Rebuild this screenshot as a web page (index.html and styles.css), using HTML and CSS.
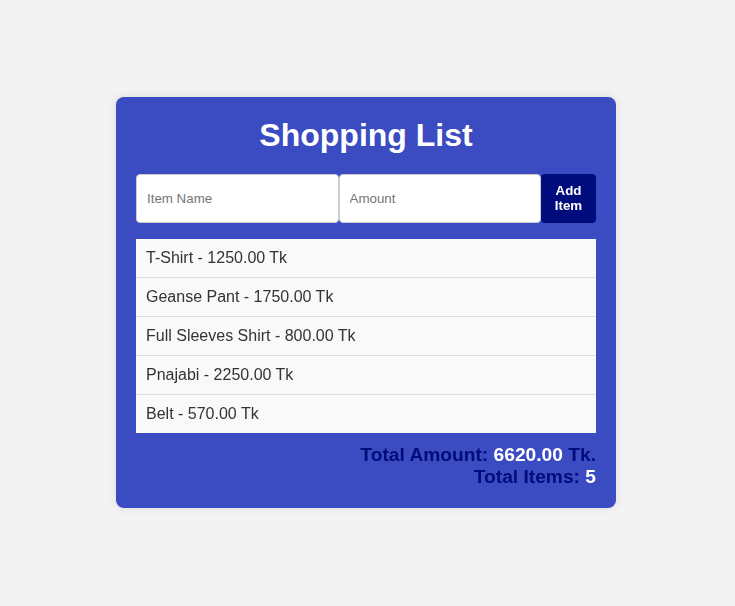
FILE: index.html
```html
<!DOCTYPE html>
<html lang="en">
<head>
<meta charset="UTF-8">
<title>Shopping List</title>
<link rel="stylesheet" href="styles.css">
</head>
<body>
  <div class="card">
    <h1 class="title">Shopping List</h1>
    <div class="form">
      <input class="field field-name" type="text" placeholder="Item Name" autofocus>
      <input class="field" type="number" placeholder="Amount">
      <button class="add-btn">Add Item</button>
    </div>
    <ul class="list">
      <li class="list-item">T-Shirt - 1250.00 Tk</li>
      <li class="list-item">Geanse Pant - 1750.00 Tk</li>
      <li class="list-item">Full Sleeves Shirt - 800.00 Tk</li>
      <li class="list-item">Pnajabi - 2250.00 Tk</li>
      <li class="list-item">Belt - 570.00 Tk</li>
    </ul>
    <div class="totals">
      <div class="total-line">Total Amount: <span class="value">6620.00</span> Tk.</div>
      <div class="total-line">Total Items: <span class="value">5</span></div>
    </div>
  </div>
</body>
</html>
```

FILE: styles.css
```css
html, body {
  margin: 0;
  padding: 0;
}

body {
  background: #f3f3f3;
  font-family: Arial, "Liberation Sans", sans-serif;
  min-height: 100vh;
  display: flex;
  align-items: center;
  justify-content: center;
  padding: 0 3px 2px 0;
  box-sizing: border-box;
}

.card {
  width: 500px;
  box-sizing: border-box;
  background: #3b4bc2;
  border-radius: 8px;
  padding: 20px;
  box-shadow: 0 0 10px rgba(0, 0, 0, 0.1);
}

.title {
  margin: 0 0 20px;
  font-size: 32px;
  font-weight: bold;
  color: #ffffff;
  text-align: center;
}

.form {
  display: flex;
  height: 49px;
}

.field {
  flex: 1;
  min-width: 0;
  box-sizing: border-box;
  border: 1px solid #cccccc;
  border-radius: 4px;
  padding: 0 10px;
  font-family: Arial, "Liberation Sans", sans-serif;
  font-size: 13.33px;
  background: #ffffff;
  color: #333;
  outline: none;
  -moz-appearance: textfield;
}

.field::placeholder {
  color: #757575;
}

.field::-webkit-outer-spin-button,
.field::-webkit-inner-spin-button {
  -webkit-appearance: none;
  margin: 0;
}

.field-name {
  caret-color: #000;
}

.add-btn {
  flex: none;
  width: 55px;
  border: none;
  border-radius: 4px;
  background: #000c7b;
  color: #ffffff;
  font-family: Arial, "Liberation Sans", sans-serif;
  font-size: 13.33px;
  font-weight: bold;
  line-height: 15px;
  padding: 0 8px;
  cursor: pointer;
}

.list {
  list-style: none;
  margin: 16px 0 0;
  padding: 0;
}

.list-item {
  background: #f9f9f9;
  color: #333333;
  font-size: 16px;
  line-height: 18px;
  padding: 10px;
  border-bottom: 1px solid #dddddd;
}

.list-item:last-child {
  border-bottom: none;
}

.totals {
  margin-top: 11px;
  text-align: right;
  font-size: 19.2px;
  font-weight: bold;
  color: #000c7b;
}

.value {
  color: #ffffff;
}
```
